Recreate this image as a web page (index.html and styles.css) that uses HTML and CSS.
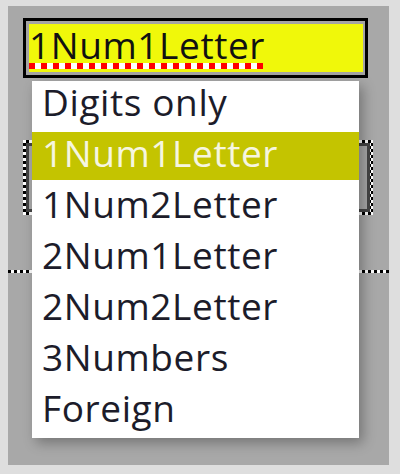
FILE: index.html
```html
<!DOCTYPE html>
<html>
<head>
    <title>Plate Format</title>
    <link rel="stylesheet" href="styles.css">
</head>
<body>
    <div class="panel">
        <div class="field">
            <div class="field-inner">
                <span class="field-text">1Num1Letter</span>
            </div>
        </div>
        <div class="focus-box">
            <div class="focus-inner"></div>
        </div>
        <div class="focus-line"></div>
    </div>

    <ul class="dropdown">
        <li class="item">Digits only</li>
        <li class="item selected">1Num1Letter</li>
        <li class="item">1Num2Letter</li>
        <li class="item">2Num1Letter</li>
        <li class="item">2Num2Letter</li>
        <li class="item">3Numbers</li>
        <li class="item">Foreign</li>
    </ul>
</body>
</html>
```

FILE: styles.css
```css
* {
    margin: 0;
    padding: 0;
    box-sizing: border-box;
    font-family: 'Open Sans', sans-serif;
}

body {
    background-color: #dedede;
    padding: 6px 11px 9px 8px;
}

.panel {
    background: #a8a8a8;
    height: 459px;
    padding-top: 12px;
}

.field {
    margin-left: 15px;
    width: 345px;
    height: 60px;
    border: 3px solid #000;
    padding: 3px 2px 3px 3px;
    background: #a4a4a4;
}

.field-inner {
    background: #f0f80a;
    height: 48px;
    padding-top: 3px;
}

.field-text {
    display: inline-block;
    font-size: 37px;
    line-height: 36px;
    letter-spacing: 0.6px;
    color: #111;
    padding-bottom: 6px;
    background-image: repeating-linear-gradient(90deg, #ff0000 0 6px, #ffffff 6px 12px);
    background-size: 234px 6px;
    background-position: left bottom;
    background-repeat: no-repeat;
}

.focus-box {
    margin: 62px 0 0 15px;
    width: 350px;
    height: 75px;
    padding: 3px;
    background: repeating-conic-gradient(#000 0 25%, #fff 0 50%) 0 0 / 6px 6px;
}

.focus-inner {
    height: 100%;
    border: 3px solid #444;
    background: #a8a8a8;
}

.focus-line {
    margin-top: 55px;
    height: 3px;
    background: repeating-linear-gradient(90deg, #000 0 3px, #fff 3px 6px);
}

.dropdown {
    list-style: none;
    position: absolute;
    left: 32px;
    top: 81px;
    width: 327px;
    height: 357px;
    background: #fff;
    box-shadow: 4px 5px 12px rgba(0,0,0,0.3);
}

.item {
    font-size: 37px;
    line-height: 41px;
    letter-spacing: 0.6px;
    padding: 0 0 7px 10px;
    margin-bottom: 3px;
    color: #1c1c2a;
    white-space: nowrap;
}

.item.selected {
    background: #c4c400;
    color: #f6f6e0;
}
```
